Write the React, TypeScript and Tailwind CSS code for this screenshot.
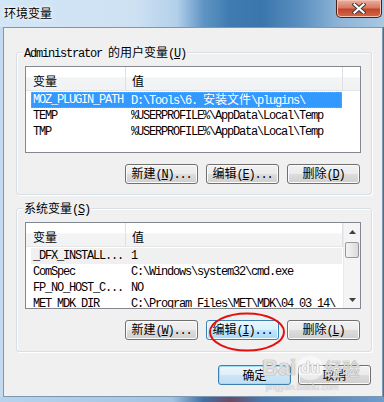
import React from "react";

function M({ t }: { t: string }) {
  const parts = t.split(/([\x00-\x7f]+)/).filter((p) => p.length > 0);
  return (
    <>
      {parts.map((p, i) =>
        /^[\x00-\x7f]+$/.test(p) ? (
          <span key={i} className="tracking-[-1.2px]">
            {p}
          </span>
        ) : (
          <span key={i} className="font-['Noto_Sans_CJK_SC',sans-serif]">
            {p}
          </span>
        )
      )}
    </>
  );
}

function Mn({ pre, k, post }: { pre: string; k: string; post: string }) {
  return (
    <span className="whitespace-pre">
      <M t={pre + "("} />
      <span className="underline underline-offset-1 tracking-[-1.2px]">{k}</span>
      <M t={")" + post} />
    </span>
  );
}

type BtnKind = "normal" | "hover" | "default";

function Btn({ children, kind = "normal" }: { children: React.ReactNode; kind?: BtnKind }) {
  const base =
    "w-[73px] h-[20px] rounded-[3px] border flex items-center justify-center text-[12px] leading-[14px] whitespace-pre";
  const cls =
    kind === "hover"
      ? "border-[#3c7fb1] bg-[linear-gradient(#eaf6fd_0%,#d9f0fc_50%,#bee6fd_50%,#a7d9f5_100%)] shadow-[inset_0_0_0_1px_#f4fbff]"
      : kind === "default"
      ? "border-[#3c7fb1] bg-[linear-gradient(#edf5fb_0%,#e0eef9_50%,#cbe5f6_50%,#c0dff3_100%)] shadow-[inset_0_0_0_1px_#9edcf9]"
      : "border-[#707070] bg-[linear-gradient(#f2f2f2_0%,#ebebeb_50%,#dddddd_50%,#cfcfcf_100%)] shadow-[inset_0_0_0_1px_#fcfcfc]";
  return <div className={base + " " + cls}>{children}</div>;
}

type Row = { a: string; b: string; sel?: "active" | "inactive" };

function ListView({ rows, scroll }: { rows: Row[]; scroll?: boolean }) {
  return (
    <div className="w-[336px] h-[87px] border border-[#828790] bg-white flex overflow-hidden">
      <div className="flex-1 flex flex-col min-w-0">
        <div className="h-[24px] shrink-0 flex bg-[linear-gradient(#ffffff_0%,#ffffff_45%,#f3f4f6_46%,#f1f2f4_100%)] border-b border-[#e5e5e5]">
          <div className="w-[100px] shrink-0 border-r border-[#dde0e5] pl-[7px] pt-[7px] font-['Noto_Sans_CJK_SC',sans-serif]">
            变量
          </div>
          <div className="w-[217px] shrink-0 border-r border-[#dde0e5] pl-[6px] pt-[7px] font-['Noto_Sans_CJK_SC',sans-serif]">
            值
          </div>
          <div className="flex-1" />
        </div>
        <div className="pt-[1px] flex flex-col">
          {rows.map((r, i) => (
            <div
              key={i}
              className={
                "h-[16px] shrink-0 ml-[5px] w-[311px] flex items-center whitespace-pre " +
                (r.sel === "active"
                  ? "bg-[#3399ff] text-white outline-1 outline-dotted outline-[#e8902e] -outline-offset-1"
                  : r.sel === "inactive"
                  ? "bg-[#f0f0f0]"
                  : "")
              }
            >
              <div className="w-[100px] shrink-0 pl-[2px]">
                <M t={r.a} />
              </div>
              <div className="flex-1 whitespace-pre overflow-hidden">
                <M t={r.b} />
              </div>
            </div>
          ))}
        </div>
      </div>
      {scroll && (
        <div className="w-[17px] shrink-0 flex flex-col bg-[#f4f4f4] border-l border-[#eaeaea]">
          <div className="h-[17px] flex items-center justify-center">
            <svg width="7" height="4" viewBox="0 0 7 4">
              <path d="M0 4 L3.5 0 L7 4 Z" fill="#404040" />
            </svg>
          </div>
          <div className="mt-[2px] mx-[1px] h-[16px] rounded-[2px] border border-[#979797] bg-[linear-gradient(90deg,#f3f3f3_0%,#e8e8e8_50%,#d9d9d9_100%)]" />
          <div className="flex-1" />
          <div className="h-[17px] flex items-center justify-center">
            <svg width="7" height="4" viewBox="0 0 7 4">
              <path d="M0 0 L3.5 4 L7 0 Z" fill="#404040" />
            </svg>
          </div>
        </div>
      )}
    </div>
  );
}

function Group({ label, children, h }: { label: React.ReactNode; children: React.ReactNode; h: string }) {
  return (
    <div className={"relative ml-[12px] w-[356px] rounded-[3px] border border-[#d5dfe5] shadow-[inset_1px_1px_0_#ffffff,1px_1px_0_#ffffff] flex flex-col pl-[8px] pt-[13px] " + h}>
      <div className="absolute left-[6px] -top-[8px] px-[1px] bg-[#f0f0f0] leading-[14px] whitespace-pre">
        {label}
      </div>
      {children}
    </div>
  );
}

export default function App() {
  return (
    <div className="relative w-[384px] h-[402px] overflow-hidden flex flex-col font-['Liberation_Mono','Noto_Sans_CJK_SC',monospace] text-[12px] leading-[14px] text-black bg-[#c6dbee]">
      {/* Title bar */}
      <div className="relative h-[27px] shrink-0 bg-[linear-gradient(90deg,#d3e6f6_0%,#cde1f3_35%,#b3d0ea_46%,#5f95c4_53%,#3f7bb0_60%,#3a76ab_68%,#5a8fbf_78%,#8cb3d6_88%,#a8c7e2_100%)]">
        <div className="pl-[4px] pt-[6px] font-['Noto_Sans_CJK_SC',sans-serif] text-[12px] leading-[14px] [text-shadow:0_0_5px_#ffffff,0_0_3px_#ffffff]">
          环境变量
        </div>
        <div className="absolute right-[2px] top-0 w-[46px] h-[18px] rounded-b-[5px] border border-t-0 border-[#4a2018] bg-[linear-gradient(#eab2a2_0%,#d87a62_45%,#c3452c_55%,#cf6a4c_100%)] shadow-[inset_0_0_0_1px_#f3c2b4] flex items-center justify-center">
          <svg width="14" height="11" viewBox="0 0 14 11">
            <path d="M2.5 1.5 L11.5 9.5 M11.5 1.5 L2.5 9.5" stroke="#3b3b3b" strokeWidth="4.2" strokeLinecap="square" />
            <path d="M2.5 1.5 L11.5 9.5 M11.5 1.5 L2.5 9.5" stroke="#ffffff" strokeWidth="2.2" strokeLinecap="square" />
          </svg>
        </div>
      </div>

      {/* Body */}
      <div className="flex h-[370px] shrink-0">
        <div className="w-[3px] bg-[#c3d9ee]" />
        <div className="w-[380px] border border-[#7d97b1] bg-[#f0f0f0] flex flex-col">
          <div className="mt-[24px]">
            <Group
              h="h-[143px]"
              label={
                <>
                  <M t="Administrator 的用户变量" />
                  <Mn pre="" k="U" post="" />
                </>
              }
            >
              <ListView
                rows={[
                  { a: "MOZ_PLUGIN_PATH", b: "D:\\Tools\\6. 安装文件\\plugins\\", sel: "active" },
                  { a: "TEMP", b: "%USERPROFILE%\\AppData\\Local\\Temp" },
                  { a: "TMP", b: "%USERPROFILE%\\AppData\\Local\\Temp" },
                ]}
              />
              <div className="mt-[11px] mr-[11px] flex justify-end gap-[8px]">
                <Btn>
                  <Mn pre="新建" k="N" post="..." />
                </Btn>
                <Btn>
                  <Mn pre="编辑" k="E" post="..." />
                </Btn>
                <Btn>
                  <Mn pre="删除" k="D" post="" />
                </Btn>
              </div>
            </Group>
          </div>

          <div className="mt-[13px]">
            <Group h="h-[144px]" label={<Mn pre="系统变量" k="S" post="" />}>
              <ListView
                scroll
                rows={[
                  { a: "_DFX_INSTALL...", b: "1", sel: "inactive" },
                  { a: "ComSpec", b: "C:\\Windows\\system32\\cmd.exe" },
                  { a: "FP_NO_HOST_C...", b: "NO" },
                  { a: "MET_MDK_DIR", b: "C:\\Program Files\\MET\\MDK\\04_03_14\\" },
                ]}
              />
              <div className="mt-[11px] mr-[11px] flex justify-end gap-[8px]">
                <Btn>
                  <Mn pre="新建" k="W" post="..." />
                </Btn>
                <Btn kind="hover">
                  <Mn pre="编辑" k="I" post="..." />
                </Btn>
                <Btn>
                  <Mn pre="删除" k="L" post="" />
                </Btn>
              </div>
            </Group>
          </div>

          <div className="mt-[13px] mr-[11px] flex justify-end gap-[7px]">
            <Btn kind="default">
              <span className="font-['Noto_Sans_CJK_SC',sans-serif]">确定</span>
            </Btn>
            <Btn>
              <span className="font-['Noto_Sans_CJK_SC',sans-serif]">取消</span>
            </Btn>
          </div>
        </div>
        <div className="w-[1px] bg-[#5a6d80]" />
      </div>

      {/* Bottom frame */}
      <div className="flex-1 bg-[linear-gradient(90deg,#b7d3ec_0%,#a3c4e2_45%,#3f70a4_53%,#6d4a62_60%,#4778ab_68%,#6c9dcb_100%)]" />

      {/* Red annotation ellipse */}
      <svg className="absolute left-[208px] top-[311px]" width="78" height="42" viewBox="0 0 78 42">
        <ellipse cx="39" cy="21" rx="37" ry="18.5" fill="none" stroke="#e21010" strokeWidth="2" />
      </svg>

      {/* Watermark */}
      <div className="absolute left-[262px] top-[356px] flex items-center gap-[1px] text-white/70 font-['Liberation_Sans',sans-serif] font-bold text-[22px] leading-[24px] [text-shadow:0_0_1px_#9a9a9a,0_0_1px_#9a9a9a]">
        <span>Bai</span>
        <span className="w-[26px] h-[24px] rounded-full bg-white/50 text-[#ffffff]/90 text-[16px] flex items-center justify-center">du</span>
        <span className="font-['Noto_Sans_CJK_SC',sans-serif] text-[18px] font-normal">经验</span>
      </div>
      <div className="absolute left-[266px] top-[382px] text-white/60 text-[9px] leading-[10px] font-['Liberation_Sans',sans-serif] [text-shadow:0_0_1px_#a0a0a0]">
        jingyan.baidu.com
      </div>
    </div>
  );
}
